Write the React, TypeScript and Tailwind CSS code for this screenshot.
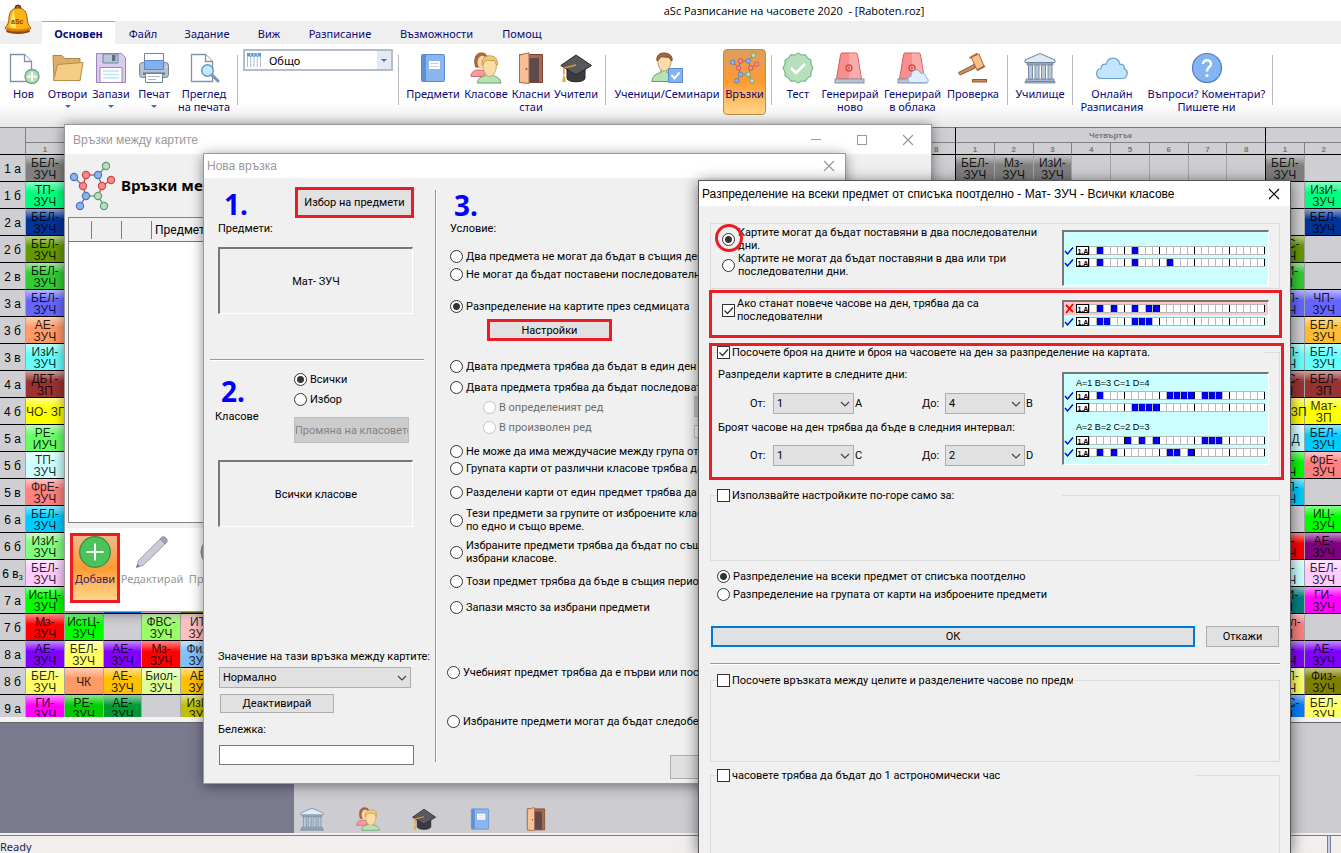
import React from "react";

type Cell = [string, string];
const NONE: Cell = ["", ""];

/* ---------- Icons ---------- */

type IconProps = { className?: string };

const svg = (viewBox: string, body: React.ReactNode) =>
  function Icon({ className = "size-8" }: IconProps) {
    return (
      <svg viewBox={viewBox} className={className} aria-hidden="true">
        {body}
      </svg>
    );
  };

const BellIcon = svg(
  "0 0 28 31",
  <>
    <ellipse cx="14" cy="27" rx="12" ry="3" fill="#8a4a12" />
    <circle cx="14" cy="4" r="3" fill="#8a5a1a" stroke="#4d2d08" />
    <path d="M14 4C8 4 5.500 8 5 13c-.3 5-.8 8-4 11 2 5 24 5 26 0-3.200-3-3.700-6-4-11-.5-5-3-9-9-9z" fill="#f9b514" stroke="#a55a08" />
    <path d="M10 7c-3 4-2.500 9-4 15 2 2 4 2 6 2-1-6-1-12-2-17z" fill="#fff27a" opacity=".85" />
    <path d="M3 24c4 3 18 3 22 0" stroke="#e07a10" strokeWidth="2" fill="none" />
    <text x="7" y="20" fontSize="7" fontWeight="bold" fill="#9c3a08" fontFamily="Liberation Sans, sans-serif">aSc</text>
  </>,
);

const Page = (
  <path d="M2.500 2.500h14l7 7v20h-21z" fill="#fff" stroke="#7c93a8" strokeWidth="1.300" />
);

const NewIcon = svg(
  "0 0 32 32",
  <>
    {Page}
    <path d="M16.500 2.500v7h7" fill="#fff" stroke="#7c93a8" strokeWidth="1.300" />
    <circle cx="24" cy="24.500" r="7" fill="#b5dfb9" stroke="#67a978" strokeWidth="1.300" />
    <path d="M24 20v9M19.500 24.500h9" stroke="#fff" strokeWidth="2" />
  </>,
);
const OpenIcon = svg(
  "0 0 32 32",
  <>
    <path d="M1 3.500h9l3 3h15v22H2z" fill="#dcae67" stroke="#ad864a" />
    <path d="M5.500 12.500l25.500-2-3 18H1.500z" fill="#f4cd85" stroke="#b58c4d" />
  </>,
);
const SaveIcon = svg(
  "0 0 32 32",
  <>
    <path d="M1.500 1.500h25l4 4v25h-29z" fill="#d9ccec" stroke="#9c86b8" />
    <path d="M8 2h15v9H8z" fill="#b9c6da" stroke="#71839c" />
    <path d="M17 3h3.500v6H17z" fill="#5d6f86" />
    <path d="M5 15.500h22v15H5z" fill="#fff" stroke="#9c86b8" />
    <path d="M8 19h16M8 22.500h16M8 26h16" stroke="#bde3f6" strokeWidth="1.500" />
  </>,
);
const PrintIcon = svg(
  "0 0 32 32",
  <>
    <path d="M6.500 1.500h19v10h-19z" fill="#fff" stroke="#71839c" />
    <rect x="1.500" y="10.500" width="29" height="15" rx="3" fill="#b3c1d4" stroke="#71839c" />
    <path d="M6.500 8.500h19v9h-19z" fill="#82b0f0" stroke="#5c86c4" />
    <rect x="27" y="14" width="2" height="2" fill="#ffd86b" />
    <path d="M5 21.500h22" stroke="#5d6f86" strokeWidth="2" />
    <path d="M7.500 21.500h17v9h-17z" fill="#fff" stroke="#71839c" />
    <path d="M10 24.500h12M10 27.500h8" stroke="#a9b6c6" />
  </>,
);
const PreviewIcon = svg(
  "0 0 32 32",
  <>
    <g transform="translate(1 0)">{Page}</g>
    <path d="M17.500 2.500v7h7" fill="#fff" stroke="#7c93a8" strokeWidth="1.300" />
    <path d="M24 23l6 6" stroke="#7c93a8" strokeWidth="3" strokeLinecap="round" />
    <circle cx="19.500" cy="18.500" r="5.800" fill="#c4e8fd" stroke="#5d97c9" strokeWidth="1.400" />
  </>,
);
const BookIcon = svg(
  "0 0 32 32",
  <>
    <rect x="4.500" y="2.500" width="23" height="27" rx="1" fill="#8ab5f0" stroke="#5a8bd0" />
    <path d="M5 3h4v26H5z" fill="#5f90d4" />
    <path d="M12 9h11v8H12z" fill="#fff" />
    <path d="M13.500 11.500h8M13.500 14.500h8" stroke="#c5cfdd" />
  </>,
);
const PeopleIcon = svg(
  "0 0 34 34",
  <>
    <path d="M6 16C4 9 5 1 12 1s8 6 7 15z" fill="#b1693d" stroke="#8e4f29" />
    <ellipse cx="13" cy="11" rx="5" ry="7" fill="#fbd6a8" />
    <path d="M1 26c0-5 4-7 8-7l8 1-3 6z" fill="#f79aa2" stroke="#d5606a" />
    <path d="M8 33c0-5 4-7 9-8v-5h6v5c6 1 9 3 10 8z" fill="#b9e2b4" stroke="#5f9d62" />
    <path d="M14 15c0-5 2-9 7-9s7 4 7 9-3 11-7 11-7-6-7-11z" fill="#fcdca8" stroke="#d0a25e" />
    <path d="M13 14c-1-7 3-10 8-10s9 3 8 10c-2-1-2-4-3-5-4 1-7-1-9 0-2 1-2 4-4 5z" fill="#ecca78" stroke="#c99b42" />
  </>,
);
const DoorIcon = svg(
  "0 0 32 32",
  <>
    <path d="M4.500 2.500h23v28h-23z" fill="#a8694d" stroke="#7b4630" />
    <path d="M14 6h10v24H14z" fill="#5b4a4e" />
    <path d="M4.500 3L14 .8v30.700l-9.500-1z" fill="#f9bf96" stroke="#a8694d" />
    <circle cx="11.500" cy="17" r="1" fill="#8e4f29" />
  </>,
);
const CapIcon = svg(
  "0 0 32 32",
  <>
    <path d="M7 16v10c0 5 18 5 18 0V16z" fill="#3c3c40" stroke="#222" />
    <path d="M16 3l15.500 10.500L16 23 .8 13.500z" fill="#57595e" stroke="#232427" />
    <path d="M16 13L4 16v6" fill="none" stroke="#dd9a2c" strokeWidth="1.600" />
    <path d="M4 21l2 9H2z" fill="#eda93a" />
  </>,
);
const StudentIcon = svg(
  "0 0 32 32",
  <>
    <path d="M1 29.500c0-6 5-8 9-9v-4h6v4c5 1 8 3 9 9z" fill="#b9e2b4" stroke="#5f9d62" />
    <path d="M7 10c0-4 3-7 6-7s7 3 7 7-3 9-7 9-6-5-6-9z" fill="#fcdca8" stroke="#c39662" />
    <path d="M6 9c-1-6 3-8 7-8s9 2 8 8c-2-1-2-3-3-4-3 1-6-1-8 0S8 8 6 9z" fill="#a3683f" stroke="#7f4b28" />
    <path d="M17.500 16.500h14v14h-14z" fill="#83b4f2" stroke="#5a8bd0" />
    <path d="M20.500 23l3 3.500 5-6" fill="none" stroke="#fff" strokeWidth="2" />
  </>,
);
const LINK_EDGES = [
  [4, 15, 13, 24, "#4b76b8"], [13, 24, 16, 13, "#c9484b"], [16, 13, 28, 13, "#c9484b"],
  [28, 13, 36, 4, "#5f9d75"], [28, 13, 32, 24, "#4b76b8"], [32, 24, 41, 18, "#c9484b"],
  [32, 24, 28, 34, "#c9484b"], [28, 34, 16, 34, "#5f9d75"], [13, 24, 16, 34, "#c9484b"],
  [16, 34, 10, 44, "#4b76b8"], [28, 34, 34, 44, "#5f9d75"],
] as const;
const LINK_NODES = [
  [4, 15, "#8ab5f0", "#4b76b8"], [16, 13, "#f98b8b", "#c9484b"], [28, 13, "#8ab5f0", "#4b76b8"],
  [36, 4, "#b9dfc0", "#5f9d75"], [41, 18, "#f98b8b", "#c9484b"], [32, 24, "#f98b8b", "#c9484b"],
  [13, 24, "#f98b8b", "#c9484b"], [16, 34, "#8ab5f0", "#4b76b8"], [28, 34, "#b9dfc0", "#5f9d75"],
  [10, 44, "#8ab5f0", "#4b76b8"], [34, 44, "#b9dfc0", "#5f9d75"],
] as const;
const LinksIcon = svg(
  "-1 -1 48 50",
  <>
    {LINK_EDGES.map(([x1, y1, x2, y2, c], i) => (
      <line key={i} x1={x1} y1={y1} x2={x2} y2={y2} stroke={c} strokeWidth="1.300" />
    ))}
    {LINK_NODES.map(([x, y, f, s], i) => (
      <circle key={i} cx={x} cy={y} r="3.600" fill={f} stroke={s} strokeWidth="1.200" />
    ))}
  </>,
);
const TestIcon = svg(
  "0 0 32 32",
  <>
    <path d="M16 1l3.500 2 4-.3 2 3.300 3.500 2v4l2 4-2 4v4l-3.500 2-2 3.300-4-.3-3.500 2-3.500-2-4 .3-2-3.300L3 24v-4l-2-4 2-4V8l3.500-2 2-3.300 4 .3z" fill="#b7dfba" stroke="#67a978" />
    <path d="M9 16l5 5 9-9" fill="none" stroke="#fff" strokeWidth="2.600" />
  </>,
);
const siren = (
  <>
    <path d="M7.500 1h15l1 2 4 24h-25l4-24z" fill="#f88f8f" stroke="#d65c5c" />
    <path d="M15 1.500h7l1 2 4 23H15z" fill="#f9acac" />
    <rect x="1" y="27" width="29" height="4" fill="#b7c4d3" stroke="#8496aa" />
    <circle cx="15" cy="16" r="3" fill="none" stroke="#d14a4a" strokeWidth="1.300" />
    <circle cx="15" cy="16" r="1" fill="#d14a4a" />
  </>
);
const SirenIcon = svg("0 0 32 32", siren);
const SirenCloudIcon = svg(
  "0 0 32 32",
  <>
    {siren}
    <path d="M14 30.500c-4 0-4-6 0-6 0-7 7-9 10-3 4-1 5 3 5 4 3 1 3 5 0 5z" fill="#dff0fd" stroke="#8db1d2" />
  </>,
);
const GavelIcon = svg(
  "0 0 32 32",
  <>
    <path d="M17 12.500L1.500 20.500l1.500 2.500L18.500 16z" fill="#c98a5c" stroke="#955c33" />
    <path d="M14 5l8-3 5 12-7 4z" fill="#f9bf86" stroke="#a9683a" />
    <path d="M12.500 6l8-4.500M20 18.500l8-4.500" stroke="#a9683a" strokeWidth="2" />
    <rect x="15.500" y="27.500" width="14" height="2.500" fill="#c98a5c" stroke="#955c33" />
  </>,
);
const SchoolIcon = svg(
  "0 0 32 32",
  <>
    <path d="M16 1.500L31 8v2.500H1V8z" fill="#dfeaf4" stroke="#71839c" />
    <path d="M3 11h26v2H3zM2 27h28v2.500H2zM1 29.500h30V31H1z" fill="#a9bcd2" stroke="#71839c" strokeWidth=".8" />
    <path d="M4.500 13h4v14h-4zM11 13h4v14h-4zM17.500 13h4v14h-4zM24 13h4v14h-4z" fill="#b9c9dc" stroke="#71839c" strokeWidth=".9" />
  </>,
);
const CloudIcon = svg(
  "0 0 32 32",
  <path d="M6 26.500c-7 0-7-9-1-10 0-4 3-5 5-4 2-8 12-9 14 0 3-1 5 2 4 4 5 2 4 10-2 10z" fill="#c3e4fd" stroke="#6b9fd0" strokeWidth="1.200" />,
);
const HelpIcon = svg(
  "0 0 32 32",
  <>
    <circle cx="16" cy="16" r="14.500" fill="#84b4f1" stroke="#4f7fc6" strokeWidth="1.200" />
    <path d="M12 12c0-5 8-5 8 0 0 3-4 3-4 7.500" fill="none" stroke="#fff" strokeWidth="2.400" />
    <circle cx="16" cy="23.500" r="1.600" fill="#fff" />
  </>,
);
const CalendarIcon = svg(
  "0 0 14 14",
  <>
    <rect x="0" y="0" width="14" height="14" fill="#fff" />
    <path d="M.5 3v11M3.700 3v11M7 3v11M10.300 3v11M13.500 3v11" stroke="#a9bdd0" />
    <rect x="0" y="0" width="14" height="3.500" fill="#5b9bd5" />
    <path d="M3.700 0v3M7 0v3M10.300 0v3" stroke="#cfe2f5" />
  </>,
);
const AddIcon = svg(
  "0 0 32 32",
  <>
    <circle cx="16" cy="16" r="15.300" fill="#4cc25a" stroke="#2e9140" strokeWidth="1.200" />
    <path d="M16 7.500v17M7.500 16h17" stroke="#fff" strokeWidth="1.800" />
  </>,
);
const PencilIcon = svg(
  "0 0 32 32",
  <>
    <path d="M.5 31.500l2-7L24 3l5 5L7.500 29z" fill="#cccbd8" stroke="#9f9db0" />
    <path d="M24 3l2-2c3-1 6 2 5 5l-2 2z" fill="#a2a0b4" stroke="#9290a6" />
    <path d="M.5 31.500l1-3.500 2.500 2.500z" fill="#777589" />
  </>,
);
const DeleteIcon = svg(
  "0 0 32 32",
  <>
    <circle cx="16" cy="16" r="15" fill="#aaa8ba" stroke="#86849a" />
    <path d="M10 10l12 12M22 10L10 22" stroke="#fff" strokeWidth="2" />
  </>,
);

const CloseGlyph = svg("0 0 12 12", <path d="M1 1l10 10M11 1L1 11" stroke="currentColor" strokeWidth="1.200" />);

/* ---------- Ribbon ---------- */

const TABS = [
  ["Файл", "w-14"], ["Задание", "w-[72px]"], ["Виж", "w-[52px]"], ["Разписание", "w-[90px]"],
  ["Възможности", "w-[103px]"], ["Помощ", "w-[68px]"],
];

function RibbonButton({
  icon: Icon, lines, width, arrow, active, iconClass,
}: {
  icon: React.FC<IconProps>; lines: string[]; width: string; arrow?: boolean; active?: boolean; iconClass?: string;
}) {
  return (
    <button
      type="button"
      className={`flex h-[66px] shrink-0 flex-col items-center whitespace-nowrap ${width} ${
        active ? "rounded-sm border border-[#c58a3a] bg-linear-to-b from-[#d99f5c] via-[#ff9a2e] to-[#ffd78a] pt-0.5" : "pt-[3px]"
      }`}
    >
      <Icon className={iconClass} />
      <span className="mt-[3px] flex flex-col items-center">
        {lines.map((l) => (
          <span key={l}>{l}</span>
        ))}
      </span>
      {arrow && <span className="mt-[5px] size-0 border-x-[3px] border-t-[3px] border-x-transparent border-t-[#3f6fa8]" />}
    </button>
  );
}

const Divider = () => <span className="mx-[5px] mt-1.5 h-[50px] w-px shrink-0 bg-[#b4b8be]" />;

function Ribbon() {
  return (
    <header className="font-[Noto_Sans,sans-serif] text-[11px] leading-[13px] text-[#0a0a78]">
      <div className="flex h-[21px] items-center justify-center bg-white pl-[247px]">
        <h1 className="whitespace-pre font-[Open_Sans,sans-serif] text-[11px] text-black">{"aSc Разписание на часовете 2020  - [Raboten.roz]"}</h1>
      </div>
      <nav className="flex h-[23px] items-stretch bg-[#efefef] pl-[42px]">
        <button type="button" className="w-[73px] border-t border-[#a8a8a8] bg-white font-bold">Основен</button>
        {TABS.map(([t, w]) => (
          <button key={t} type="button" className={`${w} pt-0.5 whitespace-nowrap`}>{t}</button>
        ))}
      </nav>
      <div className="flex h-[83px] items-start overflow-hidden bg-linear-to-b from-white from-70% to-[#e8e8e8] pt-[5px] pl-0.5">
        <RibbonButton icon={NewIcon} lines={["Нов"]} width="w-[43px]" />
        <RibbonButton icon={OpenIcon} lines={["Отвори"]} width="w-[45px]" arrow />
        <RibbonButton icon={SaveIcon} lines={["Запази"]} width="w-[42px]" arrow />
        <RibbonButton icon={PrintIcon} lines={["Печат"]} width="w-[44px]" arrow />
        <RibbonButton icon={PreviewIcon} lines={["Преглед", "на печата"]} width="w-[56px]" />
        <Divider />
        <label className="relative flex h-[22px] w-[150px] shrink-0 items-center border-2 border-[#b5bccb] bg-white text-black">
          <CalendarIcon className="absolute left-0.5 size-3.5" />
          <select aria-label="Изглед" className="h-full w-full appearance-none pl-6">
            <option>Общо</option>
          </select>
          <span className="pointer-events-none absolute inset-y-0 right-0 flex w-3.5 items-center justify-center bg-[#e5e9f3]">
            <span className="size-0 border-x-[3px] border-t-[3px] border-x-transparent border-t-[#3f6fa8]" />
          </span>
        </label>
        <Divider />
        <RibbonButton icon={BookIcon} lines={["Предмети"]} width="w-[58px]" />
        <RibbonButton icon={PeopleIcon} lines={["Класове"]} width="w-[48px]" />
        <RibbonButton icon={DoorIcon} lines={["Класни", "стаи"]} width="w-[42px]" />
        <RibbonButton icon={CapIcon} lines={["Учители"]} width="w-[48px]" />
        <Divider />
        <RibbonButton icon={StudentIcon} lines={["Ученици/Семинари"]} width="w-[112px]" />
        <RibbonButton icon={LinksIcon} lines={["Връзки"]} width="w-[43px]" active />
        <Divider />
        <RibbonButton icon={TestIcon} lines={["Тест"]} width="w-[42px]" />
        <RibbonButton icon={SirenIcon} lines={["Генерирай", "ново"]} width="w-[62px]" />
        <RibbonButton icon={SirenCloudIcon} lines={["Генерирай", "в облака"]} width="w-[63px]" />
        <RibbonButton icon={GavelIcon} lines={["Проверка"]} width="w-[58px]" />
        <Divider />
        <RibbonButton icon={SchoolIcon} lines={["Училище"]} width="w-[54px]" />
        <Divider />
        <RibbonButton icon={CloudIcon} lines={["Онлайн", "Разписания"]} width="w-[68px]" />
        <RibbonButton icon={HelpIcon} lines={["Въпроси? Коментари?", "Пишете ни"]} width="w-[121px]" />
        <Divider />
      </div>
    </header>
  );
}

/* ---------- Timetable ---------- */

const DAYS = ["Понеделник", "Вторник", "Сряда", "Четвъртък", "Петък"];
const PERIODS = [1, 2, 3, 4, 5, 6, 7, 8];

type Row = { name: string; mon: Cell[]; thu?: Cell[]; fri: Cell[] };

const ROWS: Row[] = [
  { name: "1 а", mon: [["БЕЛ- ЗУЧ", "bg-[#808080]"]], thu: [["БЕЛ- ЗУЧ", "bg-[#808080]"], ["Мз- ЗУЧ", "bg-[#808080]"], ["ИзИ- ЗУЧ", "bg-[#808080]"]], fri: [["БЕЛ- ЗУЧ", "bg-[#808080]"], NONE] },
  { name: "1 б", mon: [["ТП- ЗУЧ", "bg-[#00ff80]"]], fri: [NONE, ["ИзИ- ЗУЧ", "bg-[#00ff80]"]] },
  { name: "2 а", mon: [["БЕЛ- ЗУЧ", "bg-[#003399]"]], fri: [NONE, ["БЕЛ- ЗУЧ", "bg-[#003399]"]] },
  { name: "2 б", mon: [["БЕЛ- ЗУЧ", "bg-[#669900]"]], fri: [["ФВС- ЗУЧ", "bg-[#669900]"], NONE] },
  { name: "2 в", mon: [["БЕЛ- ЗУЧ", "bg-[#33cc33]"]], fri: [["ИзИ- ЗП", "bg-[#33cc33]"], NONE] },
  { name: "3 а", mon: [["БЕЛ- ЗУЧ", "bg-[#6666ff]"]], fri: [["БЕЛ- ЗУЧ", "bg-[#6666ff]"], ["ЧП- ЗУЧ", "bg-[#6666ff]"]] },
  { name: "3 б", mon: [["АЕ- ЗУЧ", "bg-[#ff9966]"]], fri: [NONE, ["БЕЛ- ЗУЧ", "bg-[#ffbb33]"]] },
  { name: "3 в", mon: [["ИзИ- ЗУЧ", "bg-[#66ffff]"]], fri: [["БЕЛ- ЗУЧ", "bg-[#66ffff]"], ["БЕЛ- ЗУЧ", "bg-[#66ffff]"]] },
  { name: "4 а", mon: [["ДБТ- ЗП", "bg-[#993333]"]], fri: [["ФВС- ЗП", "bg-[#993333]"], ["БЕЛ- ЗП", "bg-[#993333]"]] },
  { name: "4 б", mon: [["ЧО- ЗП", "bg-[#ffff00] whitespace-nowrap"]], fri: [["ЧО- ЗП", "bg-[#ffff00] whitespace-nowrap"], ["Мат- ЗП", "bg-[#ffff00]"]] },
  { name: "5 а", mon: [["РЕ- ИУЧ", "bg-[#66ff66]"]], fri: [["ЧО-Д", "bg-[#ccffff] whitespace-nowrap"], ["БЕЛ- ЗУЧ", "bg-[#00ccff]"]] },
  { name: "5 б", mon: [["ТП- ЗУЧ", "bg-[#ccffff]"]], fri: [["ТП- ЗУЧ", "bg-[#00ff00]"], ["ФрЕ- ЗУЧ", "bg-[#ff8080]"]] },
  { name: "5 в", mon: [["ФрЕ- ЗУЧ", "bg-[#ff8080]"]], fri: [["БЕЛ- ЗУЧ", "bg-[#00ccff]"], NONE] },
  { name: "6 а", mon: [["БЕЛ- ЗУЧ", "bg-[#00ccff]"]], fri: [NONE, ["ИЦ- ЗУЧ", "bg-[#00ff00]"]] },
  { name: "6 б", mon: [["ИзИ- ЗУЧ", "bg-[#80ff80]"]], fri: [["Мз- ЗУЧ", "bg-[#ff0000]"], ["АЕ- ЗУЧ", "bg-[#800080]"]] },
  { name: "6 в", mon: [["БЕЛ- ЗУЧ", "bg-[#ffccff]"]], fri: [["ТП- ЗУЧ", "bg-[#ccffff]"], ["БЕЛ- ЗУЧ", "bg-[#ffccff]"]] },
  { name: "7 а", mon: [["ИстЦ- ЗУЧ", "bg-[#00ff00]"], NONE, ["", "bg-[#0080ff]"], ["", "bg-[#ffc0ff]"], ["", "bg-[#808000]"]], fri: [["ИзИ- ЗП", "bg-[#008080]"], ["ГИ- ЗУЧ", "bg-[#ff00ff]"]] },
  { name: "7 б", mon: [["Мз- ЗУЧ", "bg-[#ff0000]"], ["ИстЦ- ЗУЧ", "bg-[#00ff00]"], NONE, ["ФВС- ЗУЧ", "bg-[#99ff66]"], ["ИТ- ЗУЧ", "bg-[#ffc0c0]"]], fri: [["Биол- ЗП", "bg-[#ff8080]"], NONE] },
  { name: "8 а", mon: [["АЕ- ЗУЧ", "bg-[#8000ff]"], ["БЕЛ- ЗУЧ", "bg-[#ffff66]"], ["АЕ- ЗУЧ", "bg-[#8000ff]"], ["Мз- ЗУЧ", "bg-[#ff0000]"], ["Фил- ЗУЧ", "bg-[#80c0ff]"]], fri: [["АЕ- ЗУЧ", "bg-[#8000ff]"], ["АЕ- ЗУЧ", "bg-[#8000ff]"]] },
  { name: "8 б", mon: [["БЕЛ- ЗУЧ", "bg-[#ffff66]"], ["ЧК", "bg-[#ff9966]"], ["АЕ- ЗУЧ", "bg-[#ffc000]"], ["Биол- ЗУЧ", "bg-[#ddff99]"], ["АЕ- ЗУЧ", "bg-[#ffc000]"]], fri: [["БЕЛ- ЗУЧ", "bg-[#ffff66]"], ["Физ- ЗУЧ", "bg-[#808000]"]] },
  { name: "9 а", mon: [["ГИ- ЗУЧ", "bg-[#ff00ff]"], ["РЕ- ЗУЧ", "bg-[#00cc00]"], ["АЕ- ЗУЧ", "bg-[#009933]"], NONE, ["ИзИ- ЗУЧ", "bg-[#c0c000]"]], fri: [["ФВС- ЗП", "bg-[#0080ff]"], ["БЕЛ- ЗУЧ", "bg-[#ffff66]"]] },
];

function Timetable() {
  return (
    <section className="h-[590px] overflow-hidden bg-[#cfced3]">
      <table className="w-[1575px] table-fixed border-separate border-spacing-0 font-[Liberation_Sans,sans-serif]">
        <colgroup>
          <col className="w-[25px]" />
          {DAYS.map((d) => PERIODS.map((p) => <col key={d + p} />))}
        </colgroup>
        <thead className="text-[8px] leading-[9px] font-bold text-[#77777b]">
          <tr className="h-4">
            <th rowSpan={2} className="border-t border-b border-t-[#77777b] border-b-black p-0" />
            {DAYS.map((d, i) => (
              <th key={d} colSpan={8} className={`border-t border-b border-l border-t-[#77777b] border-b-[#808080] p-0 ${i ? "border-l-black" : "border-l-[#808080]"}`}>{d}</th>
            ))}
          </tr>
          <tr className="h-3">
            {DAYS.map((d, i) =>
              PERIODS.map((p) => (
                <th key={d + p} className={`border-b border-l border-b-black p-0 pt-px ${i && p === 1 ? "border-l-black" : "border-l-[#808080]"}`}>{p}</th>
              )),
            )}
          </tr>
        </thead>
        <tbody>
          {ROWS.map((r) => (
            <tr key={r.name} className="h-[27px]">
              <th className="border-b border-black p-0 pt-0.5 text-xs font-normal whitespace-nowrap">
                {r.name}
                {r.name === "6 в" && <sub className="text-[7px] leading-none">3</sub>}
              </th>
              {DAYS.map((d, i) =>
                PERIODS.map((p) => {
                  const list = i === 0 ? r.mon : i === 3 ? r.thu : i === 4 ? r.fri : undefined;
                  const [text, bg] = list?.[p - 1] ?? NONE;
                  return (
                    <td
                      key={d + p}
                      className={`border-b border-l border-b-black p-0 pt-0.5 text-center text-xs leading-3 text-black/85 ${
                        i && p === 1 ? "border-l-black" : "border-l-[#a5a5a8]"
                      } ${bg ? `${bg} bg-linear-to-b from-white/55 to-transparent to-40%` : ""}`}
                    >
                      {text}
                    </td>
                  );
                }),
              )}
            </tr>
          ))}
        </tbody>
      </table>
    </section>
  );
}

/* ---------- Form parts ---------- */

function Radio({ name, label, checked, disabled, className = "" }: { name: string; label: React.ReactNode; checked?: boolean; disabled?: boolean; className?: string }) {
  return (
    <label className={`flex items-center gap-[3px] whitespace-nowrap ${disabled ? "text-[#6d6d6d]" : ""} ${className}`}>
      <input
        type="radio"
        name={name}
        defaultChecked={checked}
        disabled={disabled}
        className="size-[13px] shrink-0 appearance-none rounded-full border border-[#333] bg-white checked:bg-[radial-gradient(circle,#333_0_3px,white_4px)] disabled:border-[#c4c4c4]"
      />
      <span>{label}</span>
    </label>
  );
}

function Check({ label, checked, className = "" }: { label: React.ReactNode; checked?: boolean; className?: string }) {
  return (
    <label className={`flex items-center gap-0.5 ${className}`}>
      <span className="grid shrink-0">
        <input type="checkbox" defaultChecked={checked} className="peer col-start-1 row-start-1 size-[13px] appearance-none border border-[#333] bg-white" />
        <svg viewBox="0 0 13 13" className="pointer-events-none col-start-1 row-start-1 hidden size-[13px] peer-checked:block" aria-hidden="true">
          <path d="M2.500 6.500l3 3 5.500-6" fill="none" stroke="#333" strokeWidth="1.300" />
        </svg>
      </span>
      <span>{label}</span>
    </label>
  );
}

function Select({ value, label, className }: { value: string; label: string; className: string }) {
  return (
    <span className={`relative flex h-[21px] ${className}`}>
      <select aria-label={label} className="w-full appearance-none border border-[#adadad] bg-[#e1e1e1] pl-[3px]">
        <option>{value}</option>
      </select>
      <svg viewBox="0 0 10 6" className="pointer-events-none absolute top-2 right-1 h-1.5 w-2.5" aria-hidden="true">
        <path d="M1 1l4 4 4-4" fill="none" stroke="#444" strokeWidth="1.200" />
      </svg>
    </span>
  );
}

const BUTTON = "border border-[#adadad] bg-[#e1e1e1] text-center whitespace-nowrap";
const WINDOW_TITLE = "font-[Liberation_Sans,sans-serif] text-xs whitespace-nowrap";

const Panel = ({ children }: { children: React.ReactNode }) => (
  <div className="ml-3.5 flex h-[67px] w-[195px] items-center justify-center border-t-2 border-r border-b border-l-2 border-t-[#777] border-r-white border-b-white border-l-[#777]">
    {children}
  </div>
);

const StepNumber = ({ children }: { children: React.ReactNode }) => (
  <span className="font-[Noto_Sans,sans-serif] text-[28px] leading-7 font-bold text-[#0000ff]">{children}</span>
);

/* ---------- Windows ---------- */

function LinksWindow() {
  return (
    <section className="absolute top-[124px] left-16 flex h-[488px] w-[868px] flex-col border border-[#999] bg-[#f0f0f0] font-[Noto_Sans,sans-serif] shadow-[0_1px_12px_rgba(0,0,0,0.45)]">
      <div className="flex h-[29px] shrink-0 items-center bg-white pl-2 text-[#999]">
        <h2 className={WINDOW_TITLE}>Връзки между картите</h2>
        <button type="button" aria-label="Минимизирай" className="ml-auto flex w-[46px] justify-center"><span className="h-px w-2.5 bg-[#999]" /></button>
        <button type="button" aria-label="Увеличи" className="flex w-[46px] justify-center"><span className="size-2.5 border border-[#999]" /></button>
        <button type="button" aria-label="Затвори" className="flex w-[46px] justify-center"><CloseGlyph className="size-3" /></button>
      </div>
      <div className="flex h-[63px] shrink-0 items-center gap-1 pl-1">
        <LinksIcon className="h-[50px] w-12" />
        <h3 className="text-[15px] font-bold text-black">Връзки между картите</h3>
      </div>
      <div className="ml-[3px] flex h-[306px] shrink-0 flex-col border border-[#828282] bg-white">
        <div className="flex h-6 items-center border-b border-[#777] bg-[#f0f0f0] leading-[18px]">
          <span className="h-[18px] w-[23px] border-r border-[#7a7a9a]" />
          <span className="h-[18px] w-[30px] border-r border-[#7a7a9a]" />
          <span className="h-[18px] w-[30px] border-r border-[#7a7a9a]" />
          <span className="pl-[3px] font-[Roboto,sans-serif] text-xs leading-[18px]">Предмети</span>
        </div>
      </div>
      <div className="mt-[5px] flex flex-1 items-start bg-white pt-[5px] pl-[5px] text-[#999]">
        <button type="button" className="flex h-[70px] w-[50px] flex-col items-center border-[3px] border-[#ed1c24] bg-linear-to-b from-[#ecba88] via-[#ff9a2e] to-[#ffd78a] text-[#1d1d6e]">
          <AddIcon className="size-8 shrink-0" />
          <span className="mt-1">Добави</span>
        </button>
        <button type="button" className="flex w-16 flex-col items-center pt-[3px]" disabled>
          <PencilIcon />
          <span className="mt-1">Редактирай</span>
        </button>
        <button type="button" className="ml-1 flex w-14 flex-col items-center pt-[3px]" disabled>
          <DeleteIcon />
          <span className="mt-1">Премахни</span>
        </button>
      </div>
    </section>
  );
}

type Rule = { label: React.ReactNode; className: string; checked?: boolean; disabled?: boolean };
const RULES_A: Rule[] = [
  { label: "Два предмета не могат да бъдат в същия ден", className: "mt-3.5 h-3.5" },
  { label: "Не могат да бъдат поставени последователно", className: "mt-1 h-3.5" },
  { label: "Разпределение на картите през седмицата", className: "mt-[18px] h-3.5", checked: true },
];
const RULES_B: Rule[] = [
  { label: "Двата предмета трябва да бъдат в един ден", className: "mt-[18px] h-3.5" },
  { label: "Двата предмета трябва да бъдат последователни", className: "mt-[7px] h-3.5" },
];
const RULES_C: Rule[] = [
  { label: "Не може да има междучасие между група от часове", className: "mt-2.5 h-3.5" },
  { label: "Групата карти от различни класове трябва да", className: "mt-[3px] h-3.5" },
  { label: "Разделени карти от един предмет трябва да", className: "mt-2.5 h-3.5" },
  { label: <>Тези предмети за групите от изброените класове<br />по едно и също време.</>, className: "mt-2 h-[26px]" },
  { label: <>Избраните предмети трябва да бъдат по същото<br />избрани класове.</>, className: "mt-1.5 h-[26px]" },
  { label: "Този предмет трябва да бъде в същия период", className: "mt-[9px] h-3.5" },
  { label: "Запази място за избрани предмети", className: "mt-3 h-3.5" },
  { label: "Учебният предмет трябва да е първи или последен", className: "mt-[51px] -ml-[3px] h-3.5" },
  { label: "Избраните предмети могат да бъдат следобед", className: "mt-[35px] -ml-[3px] h-3.5" },
];

function NewLinkWindow() {
  return (
    <section className="absolute top-[153px] left-[203px] flex w-[643px] flex-col border border-[#999] bg-[#f0f0f0] shadow-[0_2px_12px_rgba(0,0,0,0.45)]">
      <div className="flex h-6 items-center justify-between bg-white pr-2.5 pl-[3px] text-[#999]">
        <h2 className={WINDOW_TITLE}>Нова връзка</h2>
        <button type="button" aria-label="Затвори"><CloseGlyph className="size-3" /></button>
      </div>
      <div className="flex items-start pt-[9px]">
        <div className="flex w-[231px] shrink-0 flex-col">
          <div className="flex h-[31px] items-start pl-5">
            <span className="mt-[3px] flex w-[71px]"><StepNumber>1.</StepNumber></span>
            <button type="button" className="h-[31px] w-[119px] border-[3px] border-[#ed1c24] bg-[#e1e1e1]">Избор на предмети</button>
          </div>
          <p className="mt-1 ml-3.5">Предмети:</p>
          <div className="mt-3" />
          <Panel>Мат- ЗУЧ</Panel>
          <hr className="mt-[45px] ml-1.5 w-[214px] border-t border-b border-t-[#999] border-b-white" />
          <div className="mt-[11px] flex items-start">
            <div className="flex w-[90px] flex-col pt-[5px] pl-[11px]">
              <span className="pl-1.5"><StepNumber>2.</StepNumber></span>
              <span className="mt-[5px]">Класове</span>
            </div>
            <div className="flex flex-col">
              <Radio name="scope" label="Всички" checked className="h-3.5" />
              <Radio name="scope" label="Избор" className="mt-1.5 h-3.5" />
              <button type="button" disabled className="mt-[11px] h-[26px] w-[115px] overflow-hidden border border-[#bfbfbf] bg-[#ccc] whitespace-nowrap text-[#838383]">Промяна на класовете</button>
            </div>
          </div>
          <div className="mt-[17px]" />
          <Panel>Всички класове</Panel>
          <label className="mt-[123px] ml-3.5 whitespace-nowrap">Значение на тази връзка между картите:</label>
          <Select value="Нормално" label="Значение на тази връзка между картите" className="mt-1 ml-[15px] w-48" />
          <button type="button" className={`mt-1.5 ml-4 h-[19px] w-[114px] ${BUTTON}`}>Деактивирай</button>
          <label htmlFor="note" className="mt-2.5 ml-3.5">Бележка:</label>
          <input id="note" className="mt-[9px] ml-[15px] h-5 w-[195px] border border-[#777] bg-white px-1" />
        </div>
        <span className="mt-[3px] h-[572px] w-0.5 shrink-0 border-r border-r-white bg-[#999]" />
        <div className="flex min-w-0 flex-1 flex-col pl-[11px]">
          <span className="mt-1 pl-1.5"><StepNumber>3.</StepNumber></span>
          <p className="mt-[3px] ml-0.5">Условие:</p>
          <fieldset className="flex min-w-0 flex-col pl-0.5">
            {RULES_A.map((r, i) => <Radio key={i} name="rule" {...r} />)}
            <button type="button" className="mt-1.5 ml-[37px] h-[22px] w-[125px] border-[3px] border-[#ed1c24] bg-[#e1e1e1] pt-px">Настройки</button>
            {RULES_B.map((r, i) => <Radio key={i} name="rule" {...r} />)}
            <div className="flex h-10">
              <div className="ml-[33px] flex w-[211px] flex-col">
                <Radio name="order" label="В определеният ред" disabled className="mt-1.5 h-3.5" />
                <Radio name="order" label="В произволен ред" disabled className="mt-1.5 h-3.5" />
              </div>
              <div className="mt-0.5 flex flex-col gap-2">
                <button type="button" disabled aria-label="Избор" className="h-[21px] w-20 shrink-0 border border-[#bfbfbf] bg-[#ccc]" />
                <input type="checkbox" disabled aria-label="Ред" className="size-[13px] shrink-0 appearance-none border border-[#c4c4c4] bg-white" />
              </div>
            </div>
            {RULES_C.map((r, i) => <Radio key={i} name="rule" {...r} />)}
          </fieldset>
          <button type="button" className={`mt-[27px] mb-1 ml-[222px] h-6 w-[73px] ${BUTTON}`}>OK</button>
        </div>
      </div>
    </section>
  );
}

const DAY_CELLS = Array.from({ length: 25 }, (_, i) => i);

function Track({ y, filled, wrong }: { y: number; filled: number[]; wrong?: boolean }) {
  return (
    <g transform={`translate(0 ${y})`}>
      {wrong ? (
        <>
          <rect x="0" y="-2" width="204" height="13" fill="#ffc8c8" />
          <path d="M2 1l7 7M9 0L2 9" stroke="#f00" strokeWidth="1.800" shapeRendering="auto" />
        </>
      ) : (
        <path d="M1 5l2.500 3L9 1.500" fill="none" stroke="#0000e0" strokeWidth="1.400" shapeRendering="auto" />
      )}
      <rect x="12.500" y=".5" width="12" height="8" fill="#fff" stroke="#000" />
      <rect x="25" y="0" width="176" height="9" fill="#b8b8b8" />
      <text x="13.500" y="7.500" fontSize="7" fontWeight="bold" fontFamily="Liberation Sans, sans-serif" fill="#000">1.A</text>
      {DAY_CELLS.map((c) => (
        <rect key={c} x={26 + c * 7} y="1" width="6" height="7" fill={filled.includes(c) ? "#0000e8" : "#fff"} />
      ))}
      {[5, 10, 15, 20, 25].map((c) => (
        <rect key={c} x={25 + c * 7} y="1" width="1" height="7" fill="#000" />
      ))}
    </g>
  );
}

function Diagram({ height, className, children }: { height: number; className: string; children: React.ReactNode }) {
  return (
    <svg
      viewBox={`0 0 204 ${height}`}
      shapeRendering="crispEdges"
      className={`w-[207px] shrink-0 border-t-2 border-r border-b border-l-2 border-t-[#777] border-r-white border-b-white border-l-[#777] bg-[#ccffff] ${className}`}
      aria-hidden="true"
    >
      {children}
    </svg>
  );
}

const DiagramText = ({ y, children }: { y: number; children: string }) => (
  <text x="12" y={y} fontSize="9" fontFamily="Liberation Sans, sans-serif" fill="#000">{children}</text>
);

function Range({ from, to, a, b }: { from: string; to: string; a: string; b: string }) {
  return (
    <div className="flex items-center">
      <span className="w-[23px]">От:</span>
      <Select value={from} label={`От ${a}`} className="w-[81px]" />
      <span className="w-[68px] pl-px">{a}</span>
      <span className="w-[23px]">До:</span>
      <Select value={to} label={`До ${b}`} className="w-20" />
      <span className="pl-px">{b}</span>
    </div>
  );
}

const GROUP = "mr-1 ml-px min-w-0 border border-[#dcdcdc] pl-1.5";

function DistributionWindow() {
  return (
    <section className="absolute top-[180px] bottom-0 left-[698px] flex w-[593px] flex-col border border-b-0 border-[#555] bg-[#f0f0f0] shadow-[0_2px_14px_rgba(0,0,0,0.55)]">
      <div className="flex h-[25px] shrink-0 items-center justify-between bg-white pr-2.5 pl-[3px] text-black">
        <h2 className={WINDOW_TITLE}>Разпределение на всеки предмет от списъка поотделно - Мат- ЗУЧ - Всички класове</h2>
        <button type="button" aria-label="Затвори"><CloseGlyph className="size-3" /></button>
      </div>
      <div className="flex min-h-0 flex-1 flex-col overflow-hidden pt-[17px] pr-1.5 pl-2.5">
        <div className="mr-1 ml-px flex h-[66px] shrink-0 items-start justify-between border border-[#dcdcdc] pt-0.5 pr-2.5 pl-[11px]">
          <div className="relative">
            <Radio name="consecutive" checked label={<>Картите могат да бъдат поставяни в два последователни<br />дни.</>} />
            <Radio name="consecutive" label={<>Картите не могат да бъдат поставяни в два или три<br />последователни дни.</>} />
            <span className="absolute -top-0.5 -left-[7px] size-7 rounded-full border-[3px] border-[#ed1c24]" />
          </div>
          <Diagram height={53} className="mt-1 h-14">
            <Track y={14} filled={[1, 6]} />
            <Track y={26} filled={[1, 6, 11]} />
          </Diagram>
        </div>
        <div className="mt-px mr-0.5 flex h-12 shrink-0 items-start justify-between border-[3px] border-[#ed1c24] pr-2.5 pl-2.5">
          <Check checked className="mt-1" label={<>Ако станат повече часове на ден, трябва да са<br />последователни</>} />
          <Diagram height={25} className="mt-[7px] h-7">
            <Track y={2} filled={[1, 3, 6, 8, 9]} wrong />
            <Track y={15} filled={[1, 2, 6, 7, 8]} />
          </Diagram>
        </div>
        <div className="mt-[5px] shrink-0 border-[3px] border-[#ed1c24]">
          <fieldset className="mr-px h-[131px] min-w-0 border-t border-r border-[#dcdcdc] pr-2.5 pl-[5px]">
            <legend className="w-[546px]">
              <Check checked label="Посочете броя на дните и броя на часовете на ден за разпределение на картата." />
            </legend>
            <div className="flex items-start justify-between">
              <div className="flex flex-col pt-[9px] pl-px">
                <span>Разпредели картите в следните дни:</span>
                <div className="mt-3 pl-8"><Range from="1" to="4" a="A" b="B" /></div>
                <span className="mt-[7px]">Броят часове на ден трябва да бъде в следния интервал:</span>
                <div className="mt-[11px] pl-8"><Range from="1" to="2" a="C" b="D" /></div>
              </div>
              <Diagram height={90} className="mt-[13px] h-[93px]">
                <DiagramText y={12}>A=1 B=3 C=1 D=4</DiagramText>
                <Track y={17} filled={[1, 11, 12, 13, 14, 16, 17, 18]} />
                <Track y={29} filled={[6, 7, 8, 9]} />
                <DiagramText y={56}>A=2 B=2 C=2 D=3</DiagramText>
                <Track y={62} filled={[5, 7, 9, 16, 17, 18]} />
                <Track y={74} filled={[1, 3, 11, 12, 14]} />
              </Diagram>
            </div>
          </fieldset>
        </div>
        <fieldset className={`mt-[9px] h-[72px] shrink-0 ${GROUP}`}>
          <legend className="w-[345px]"><Check label="Използвайте настройките по-горе само за:" /></legend>
        </fieldset>
        <div className="mt-2 flex shrink-0 flex-col gap-1 pl-2">
          <Radio name="split" checked label="Разпределение на всеки предмет от списъка поотделно" className="h-3.5" />
          <Radio name="split" label="Разпределение на групата от карти на изброените предмети" className="h-3.5" />
        </div>
        <div className="mt-[25px] mr-[5px] ml-0.5 flex shrink-0 gap-[11px]">
          <button type="button" className="h-[21px] flex-1 border-2 border-[#0078d7] bg-[#e1e1e1] leading-4">ОК</button>
          <button type="button" className={`h-[21px] w-[73px] ${BUTTON}`}>Откажи</button>
        </div>
        <hr className="mt-4 mr-1 ml-px shrink-0 border-t border-b border-t-[#999] border-b-white" />
        <fieldset className={`mt-[9px] h-[88px] shrink-0 ${GROUP}`}>
          <legend><Check label={<span className="block w-[341px] overflow-hidden whitespace-nowrap">Посочете връзката между целите и разделените часове по предмети</span>} /></legend>
        </fieldset>
        <fieldset className={`mt-[7px] min-h-[88px] flex-1 border-b-0 ${GROUP}`}>
          <legend className="w-[478px]"><Check label="часовете трябва да бъдат до 1 астрономически час" /></legend>
        </fieldset>
      </div>
    </section>
  );
}

/* ---------- Page ---------- */

export default function App() {
  return (
    <div className="relative flex h-screen min-h-[853px] w-full flex-col overflow-hidden bg-[#f2eeee] font-[Roboto,sans-serif] text-[11px] leading-[13px] text-black">
      <Ribbon />
      <BellIcon className="absolute top-1 left-1 h-[31px] w-7" />
      <Timetable />
      <div className="h-1.5 shrink-0 border-b border-[#666] bg-[#f4f4f4]" />
      <div className="flex flex-1 bg-[#7a7a8f]">
        <div className="ml-[294px] flex flex-1 items-end gap-8 bg-[#cdccd1] pb-0.5 pl-1.5">
          <SchoolIcon className="size-6" />
          <PeopleIcon className="size-6" />
          <CapIcon className="size-6" />
          <BookIcon className="size-6" />
          <DoorIcon className="size-6" />
        </div>
      </div>
      <footer className="mt-0.5 flex h-[18px] shrink-0 items-center justify-between border-t border-[#7a7a9a] text-[#1d1d50]">
        <span className="mt-1 font-[Noto_Sans,sans-serif]">Ready</span>
        <span className="mr-2.5 h-full w-1 border-x border-[#7a7a9a] bg-[#c8cfe0]" />
      </footer>
      <LinksWindow />
      <NewLinkWindow />
      <DistributionWindow />
    </div>
  );
}
